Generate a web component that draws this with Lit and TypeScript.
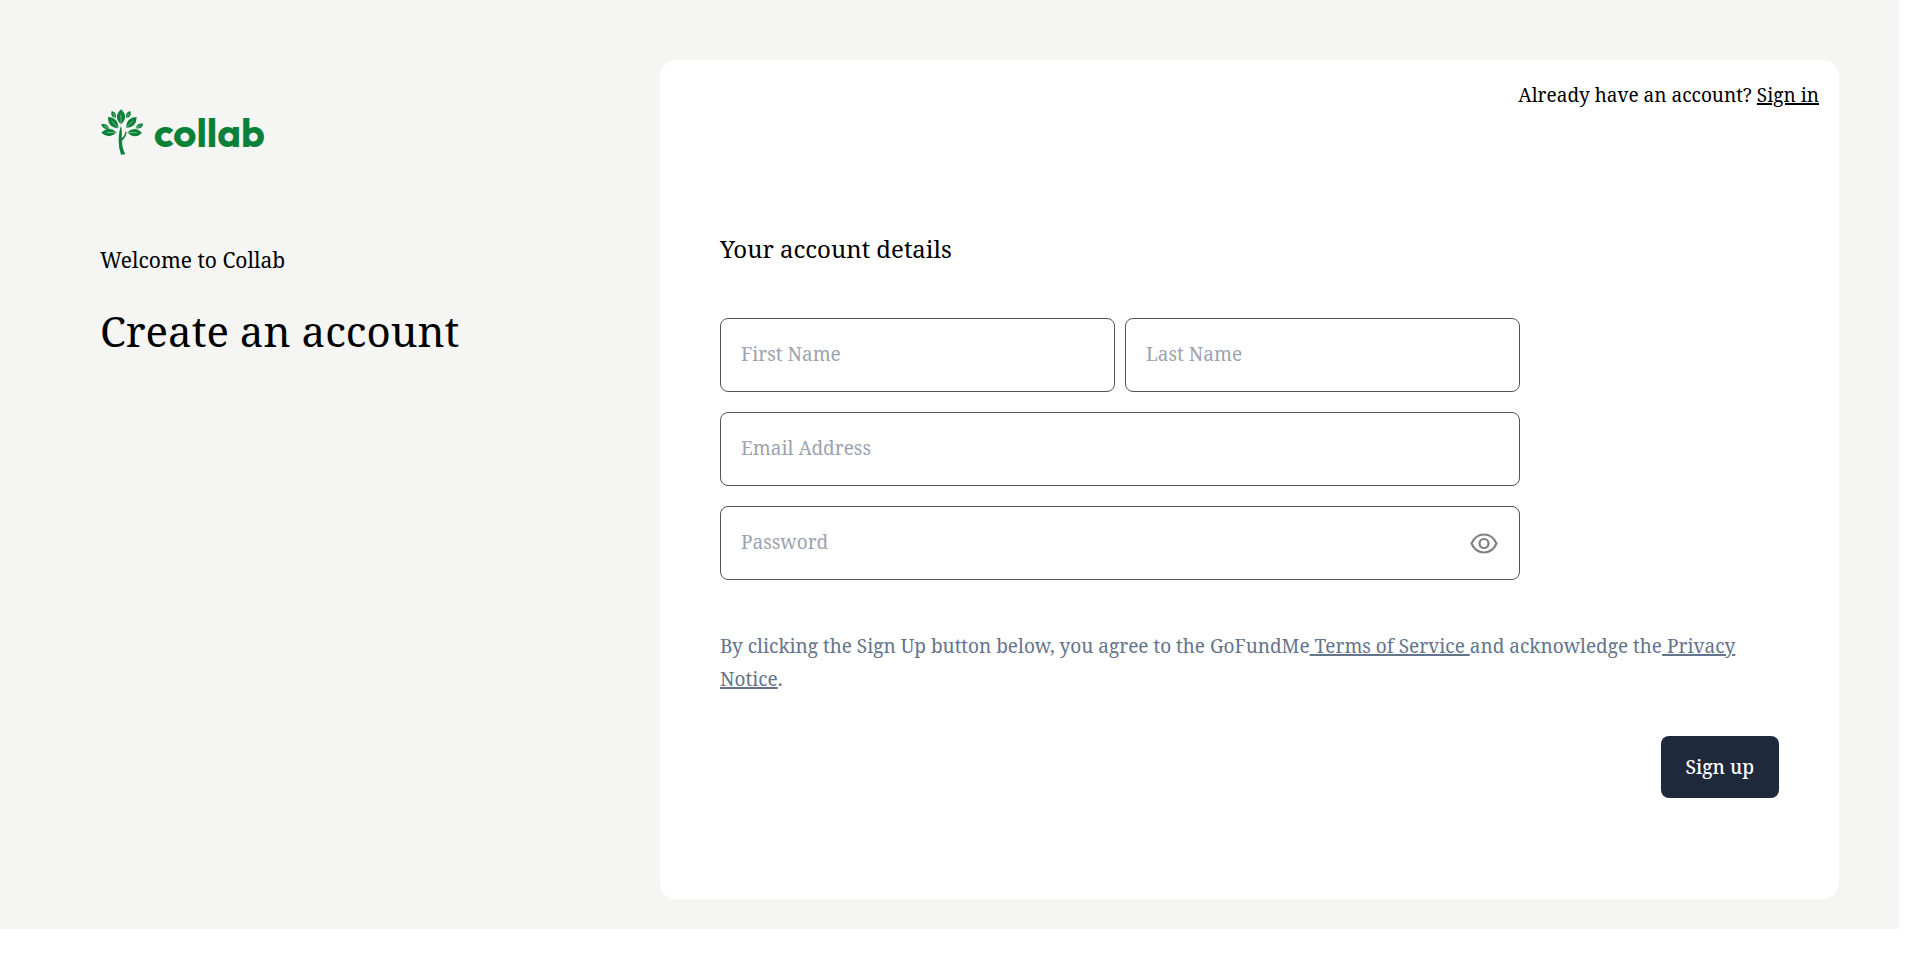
import { LitElement, html, svg, css } from "lit";
import { customElement, state } from "lit/decorators.js";

/** Leaf outlines: tip x/y, base x/y, control-point spread. */
const LEAVES: [number, number, number, number, number][] = [
  [77, 28, 77, 73, 25],
  [38, 51, 69, 85, 22],
  [124, 51, 92, 84, 22],
  [49, 33, 61, 55, 13],
  [105, 33, 93, 55, 13],
  [17, 73, 42, 86, 13],
  [144, 71, 121, 85, 13],
  [18, 98, 64, 97, 22],
  [140, 99, 96, 97, 22],
];

@customElement("collab-logo")
export class CollabLogo extends LitElement {
  static styles = css`
    :host {
      display: flex;
      align-items: center;
      gap: 10px;
      color: #0a8138;
    }
    .tree {
      width: 44px;
      height: 48px;
      flex: none;
    }
    .leaf,
    .trunk {
      fill: currentColor;
    }
    .vein {
      stroke: #f5f5f4;
      stroke-width: 1.4;
    }
    .word {
      font: 700 40px/50px Outfit, Urbanist, Poppins, sans-serif;
    }
  `;

  private leaf([x1, y1, x2, y2, w]: [number, number, number, number, number]) {
    const len = Math.hypot(x2 - x1, y2 - y1);
    const nx = (-(y2 - y1) / len) * w;
    const ny = ((x2 - x1) / len) * w;
    const mx = (x1 + x2) / 2;
    const my = (y1 + y2) / 2;
    const d = `M${x1} ${y1}Q${mx + nx} ${my + ny} ${x2} ${y2}Q${mx - nx} ${my - ny} ${x1} ${y1}Z`;
    return svg`
      <path class="leaf" d=${d}></path>
      <path class="vein" d=${`M${x1 + (x2 - x1) * 0.35} ${y1 + (y2 - y1) * 0.35}L${x2} ${y2}`}></path>`;
  }

  render() {
    return html`
      <svg class="tree" viewBox="14 26 132 140" aria-hidden="true">
        ${LEAVES.map((l) => this.leaf(l))}
        <path
          class="trunk"
          d="M77 78Q81 90 79 114Q87 110 90 95L94 96Q92 112 80 122Q80 145 90 163L77 164Q70 145 70 122Q70 95 77 78Z"
        ></path>
      </svg>
      <span class="word">collab</span>
    `;
  }
}

@customElement("app-root")
export class AppRoot extends LitElement {
  @state() private showPassword = false;

  static styles = css`
    :host {
      display: block;
      color: #000;
      font-family: "Noto Serif", "Droid Serif", serif;
      font-size: 19px;
      line-height: 30px;
      background: #fff;
    }
    * {
      box-sizing: border-box;
    }
    .page {
      display: grid;
      grid-template-columns: 600px minmax(0, 1fr);
      gap: 60px;
      min-height: calc(100vh - 29px);
      margin: 0 21px 29px 0;
      padding: 60px 60px 30px 0;
      background: #f5f5f4;
    }
    .intro {
      padding: 47px 0 0 100px;
    }
    .welcome {
      margin: 85px 0 0;
      font-size: 21px;
      line-height: 36px;
    }
    .title {
      margin: 17px 0 0;
      font-size: 42px;
      font-weight: 400;
      line-height: 72px;
    }
    .card {
      display: flex;
      flex-direction: column;
      padding: 20px 60px 100px;
      border-radius: 16px;
      background: #fff;
    }
    .signin {
      margin: 0 -40px 0 0;
      text-align: right;
    }
    a {
      color: inherit;
      text-decoration-thickness: 2px;
    }
    .heading {
      margin: 120px 0 50px;
      font-size: 24px;
      font-weight: 400;
      line-height: 38px;
    }
    .fields {
      display: grid;
      grid-template-columns: 1fr 1fr;
      gap: 20px 10px;
      max-width: 800px;
    }
    .field {
      position: relative;
      display: block;
    }
    .wide {
      grid-column: 1 / -1;
    }
    .input {
      display: block;
      width: 100%;
      height: 74px;
      padding: 0 20px 2px;
      border: 1px solid #57534e;
      border-radius: 8px;
      background: #fff;
      color: inherit;
      font: inherit;
    }
    .input::placeholder {
      color: #9ca3af;
      opacity: 1;
    }
    .toggle {
      position: absolute;
      top: 22px;
      right: 20px;
      display: grid;
      padding: 0;
      border: 0;
      background: none;
      color: #808080;
    }
    .eye {
      width: 32px;
      height: 30px;
      fill: none;
      stroke: currentColor;
      stroke-width: 2.2;
    }
    .legal {
      margin: 50px 0 0;
      color: #64748b;
      line-height: 33px;
    }
    .submit {
      align-self: flex-end;
      margin-top: 40px;
      padding: 16px 25px;
      border: 0;
      border-radius: 8px;
      background: #1e293b;
      color: #fff;
      font: inherit;
      font-weight: 500;
    }
  `;

  private field(label: string, type: string, wide = false) {
    return html`<label class="field ${wide ? "wide" : ""}">
      <input class="input" type=${type} placeholder=${label} aria-label=${label} />
    </label>`;
  }

  render() {
    return html`
      <main class="page">
        <section class="intro">
          <collab-logo></collab-logo>
          <p class="welcome">Welcome to Collab</p>
          <h1 class="title">Create an account</h1>
        </section>
        <form class="card" @submit=${(e: Event) => e.preventDefault()}>
          <p class="signin">Already have an account? <a href="#signin">Sign in</a></p>
          <h2 class="heading">Your account details</h2>
          <div class="fields">
            ${this.field("First Name", "text")} ${this.field("Last Name", "text")}
            ${this.field("Email Address", "email", true)}
            <div class="field wide">
              <input
                class="input"
                type=${this.showPassword ? "text" : "password"}
                placeholder="Password"
                aria-label="Password"
              />
              <button
                class="toggle"
                type="button"
                aria-label="Show password"
                @click=${() => (this.showPassword = !this.showPassword)}
              >
                <svg class="eye" viewBox="0 0 32 30">
                  <path d="M3.500 15.500C6 10 10.500 6.500 16 6.500s10 3.500 12.500 9C26 21 21.500 24.500 16 24.500S6 21 3.500 15.500Z"></path>
                  <circle cx="16" cy="15.500" r="4.500"></circle>
                </svg>
              </button>
            </div>
          </div>
          <p class="legal">
            By clicking the Sign Up button below, you agree to the GoFundMe<a href="#terms"> Terms of Service </a>and
            acknowledge the<a href="#privacy"> Privacy Notice</a>.
          </p>
          <button class="submit" type="submit">Sign up</button>
        </form>
      </main>
    `;
  }
}
